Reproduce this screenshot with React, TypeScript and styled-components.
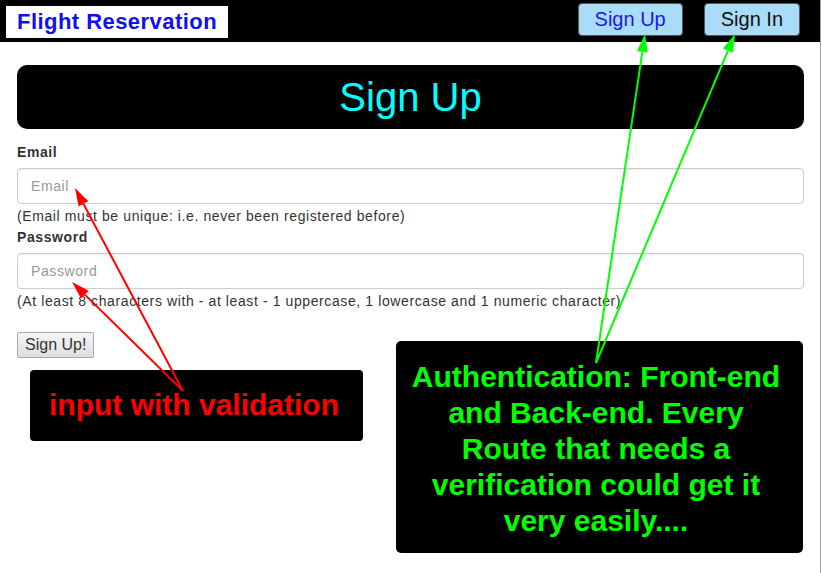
import React from "react";
import styled, { createGlobalStyle } from "styled-components";

const GlobalStyle = createGlobalStyle`
  html, body { margin: 0; padding: 0; background: #fff; }
  body { font-family: "Liberation Sans", Arial, Helvetica, sans-serif; color: #333; }
  * { box-sizing: border-box; }
`;

const Page = styled.div`
  position: relative;
  width: 821px;
  min-height: 573px;
  border-right: 1px solid #a0a0a0;
  background: #fff;
`;

const Header = styled.header`
  height: 42px;
  background: #000;
  display: flex;
  justify-content: space-between;
  align-items: flex-start;
`;

const Logo = styled.div`
  margin: 6px 0 0 6px;
  height: 32px;
  line-height: 32px;
  padding: 0 11px 0 11px;
  background: #fff;
  color: #1010f0;
  font-weight: bold;
  font-size: 22px;
  letter-spacing: 0.45px;
  white-space: nowrap;
`;

const Nav = styled.nav`
  display: flex;
  gap: 21px;
  margin: 3px 20px 0 0;
`;

const NavButton = styled.button<{ $active?: boolean }>`
  height: 33px;
  padding: 0 16px;
  border: 1px solid #555;
  border-radius: 4px;
  background: #a8dcf8;
  color: ${(p) => (p.$active ? "#1a1ae6" : "#111")};
  font-family: "Liberation Sans", Arial, sans-serif;
  font-size: 20px;
  line-height: 31px;
  cursor: pointer;
`;

const Main = styled.main`
  padding: 23px 16px 0 17px;
`;

const Title = styled.h1`
  margin: 0;
  height: 64px;
  border-radius: 10px;
  background: #000;
  color: #00ffff;
  font-weight: normal;
  font-size: 40px;
  display: flex;
  align-items: center;
  justify-content: center;
`;

const Form = styled.form`
  margin-top: 13px;
  display: flex;
  flex-direction: column;
  align-items: stretch;
`;

const Label = styled.label`
  display: block;
  font-weight: bold;
  font-size: 14px;
  letter-spacing: 0.6px;
  line-height: 20px;
  color: #333;
  margin-bottom: 6px;
`;

const Input = styled.input`
  display: block;
  width: 100%;
  height: 36px;
  padding: 6px 13px;
  border: 1px solid #ccc;
  border-radius: 4px;
  box-shadow: inset 0 1px 1px rgba(0, 0, 0, 0.075);
  font-family: "Liberation Sans", Arial, sans-serif;
  font-size: 14px;
  letter-spacing: 0.6px;
  color: #555;
  &::placeholder { color: #999; }
`;

const Help = styled.div<{ $gap?: number }>`
  font-size: 14px;
  letter-spacing: 0.6px;
  line-height: 20px;
  color: #333;
  margin-top: 2px;
  margin-bottom: ${(p) => p.$gap ?? 1}px;
  white-space: nowrap;
`;

const Submit = styled.button`
  align-self: flex-start;
  height: 26px;
  padding: 0 7px;
  border: 1px solid #a9a9a9;
  border-radius: 2px;
  background: linear-gradient(#f6f6f6, #dedede);
  color: #333;
  font-family: "Liberation Sans", Arial, sans-serif;
  font-size: 16px;
  line-height: 24px;
`;

const Callout = styled.div<{ $color: string; $x: number; $y: number; $w: number; $h: number; $r: number }>`
  position: absolute;
  left: ${(p) => p.$x}px;
  top: ${(p) => p.$y}px;
  width: ${(p) => p.$w}px;
  height: ${(p) => p.$h}px;
  border-radius: ${(p) => p.$r}px;
  background: #000;
  color: ${(p) => p.$color};
  font-weight: bold;
  font-size: 30px;
  line-height: 36px;
  text-align: center;
`;

const RedText = styled.div`
  padding: 17px 5px 0 0;
`;

const GreenText = styled.div`
  padding: 18px 20px 0 13px;
`;

const Overlay = styled.svg`
  position: absolute;
  left: 0;
  top: 0;
  width: 820px;
  height: 573px;
  pointer-events: none;
`;

type Pt = [number, number];

function Arrow({ from, to, color }: { from: Pt; to: Pt; color: string }) {
  const dx = to[0] - from[0];
  const dy = to[1] - from[1];
  const len = Math.hypot(dx, dy);
  const ux = dx / len;
  const uy = dy / len;
  const hl = 18;
  const hw = 5.5;
  const bx = to[0] - ux * hl;
  const by = to[1] - uy * hl;
  const nx = -uy * hw;
  const ny = ux * hw;
  const pts = `${to[0]},${to[1]} ${bx + nx},${by + ny} ${bx - nx},${by - ny}`;
  return (
    <g>
      <line x1={from[0]} y1={from[1]} x2={bx} y2={by} stroke={color} strokeWidth={2} />
      <polygon points={pts} fill={color} />
    </g>
  );
}

export default function App() {
  return (
    <>
      <GlobalStyle />
      <Page>
        <Header>
          <Logo>Flight Reservation</Logo>
          <Nav>
            <NavButton $active>Sign Up</NavButton>
            <NavButton>Sign In</NavButton>
          </Nav>
        </Header>
        <Main>
          <Title>Sign Up</Title>
          <Form onSubmit={(e) => e.preventDefault()}>
            <Label htmlFor="email">Email</Label>
            <Input id="email" type="email" placeholder="Email" />
            <Help>(Email must be unique: i.e. never been registered before)</Help>
            <Label htmlFor="password">Password</Label>
            <Input id="password" type="password" placeholder="Password" />
            <Help $gap={21}>
              (At least 8 characters with - at least - 1 uppercase, 1 lowercase and 1 numeric character)
            </Help>
            <Submit type="submit">Sign Up!</Submit>
          </Form>
        </Main>

        <Callout $color="#ff0000" $x={30} $y={370} $w={333} $h={71} $r={4}>
          <RedText>input with validation</RedText>
        </Callout>
        <Callout $color="#00ff00" $x={396} $y={341} $w={407} $h={212} $r={5}>
          <GreenText>
            Authentication: Front-end and Back-end. Every Route that needs a verification could get it very easily....
          </GreenText>
        </Callout>

        <Overlay viewBox="0 0 820 573">
          <Arrow from={[183, 391]} to={[75, 188]} color="#ff0000" />
          <Arrow from={[183, 391]} to={[72, 282]} color="#ff0000" />
          <Arrow from={[596, 363]} to={[645, 34]} color="#00ff00" />
          <Arrow from={[596, 363]} to={[735, 34]} color="#00ff00" />
        </Overlay>
      </Page>
    </>
  );
}
